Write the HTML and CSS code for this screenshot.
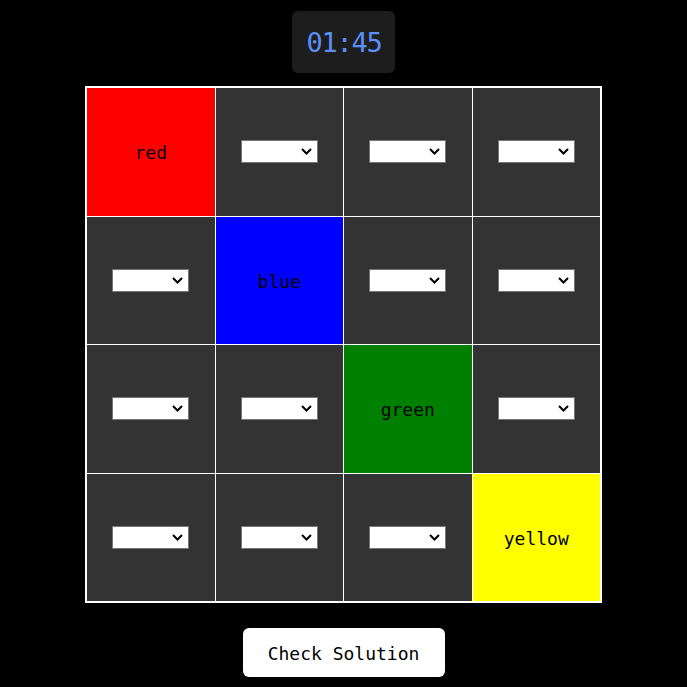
FILE: index.html
```html
<!DOCTYPE html>
<html>
<head>
<meta charset="utf-8">
<link rel="stylesheet" href="styles.css">
</head>
<body>
<div class="page">
  <div class="timer">01:45</div>
  <div class="board">
    <div class="cell c-red">red</div>
    <div class="cell"><select class="pick"><option></option></select></div>
    <div class="cell"><select class="pick"><option></option></select></div>
    <div class="cell"><select class="pick"><option></option></select></div>

    <div class="cell"><select class="pick"><option></option></select></div>
    <div class="cell c-blue">blue</div>
    <div class="cell"><select class="pick"><option></option></select></div>
    <div class="cell"><select class="pick"><option></option></select></div>

    <div class="cell"><select class="pick"><option></option></select></div>
    <div class="cell"><select class="pick"><option></option></select></div>
    <div class="cell c-green">green</div>
    <div class="cell"><select class="pick"><option></option></select></div>

    <div class="cell"><select class="pick"><option></option></select></div>
    <div class="cell"><select class="pick"><option></option></select></div>
    <div class="cell"><select class="pick"><option></option></select></div>
    <div class="cell c-yellow">yellow</div>
  </div>
  <button class="check">Check Solution</button>
</div>
</body>
</html>
```

FILE: styles.css
```css
html, body {
  margin: 0;
  padding: 0;
  background: #000;
}

body {
  font-family: "DejaVu Sans Mono", "Liberation Mono", monospace;
  color: #000;
}

.page {
  display: flex;
  flex-direction: column;
  align-items: center;
  padding-top: 11px;
}

.timer {
  width: 103px;
  height: 62px;
  box-sizing: border-box;
  background: #1d1d1d;
  border-radius: 6px;
  color: #5c8ff5;
  font-size: 27px;
  letter-spacing: -1.3px;
  padding-left: 1px;
  display: flex;
  align-items: center;
  justify-content: center;
}

.board {
  margin-top: 13px;
  width: 513px;
  display: grid;
  grid-template-columns: repeat(4, 1fr);
  grid-auto-rows: 127.5px;
  gap: 1px;
  background: #fff;
  border: 2px solid #fff;
}

.cell {
  background: #333;
  display: flex;
  align-items: center;
  justify-content: center;
  font-size: 18px;
  color: #000;
}

.label {
  padding-top: 2px;
}

.c-red, .c-blue, .c-green, .c-yellow { padding-top: 2px; }
.c-red { background: #ff0000; }
.c-blue { background: #0000ff; }
.c-green { background: #008000; }
.c-yellow { background: #ffff00; }

.pick {
  appearance: none;
  -webkit-appearance: none;
  width: 77px;
  height: 23px;
  box-sizing: border-box;
  background-color: #fff;
  background-image: url("data:image/svg+xml,%3Csvg xmlns='http://www.w3.org/2000/svg' width='11' height='7' viewBox='0 0 11 7'%3E%3Cpath d='M1 1 L5.5 5.5 L10 1' fill='none' stroke='%23000' stroke-width='2'/%3E%3C/svg%3E");
  background-repeat: no-repeat;
  background-position: right 5px center;
  border: 1px solid #767676;
  border-radius: 0;
  margin: 0;
}

.check {
  margin-top: 25px;
  width: 202px;
  height: 49px;
  background: #fff;
  color: #000;
  border: none;
  border-radius: 6px;
  font-family: "DejaVu Sans Mono", "Liberation Mono", monospace;
  font-size: 18px;
  padding: 2px 0 0;
}
```
